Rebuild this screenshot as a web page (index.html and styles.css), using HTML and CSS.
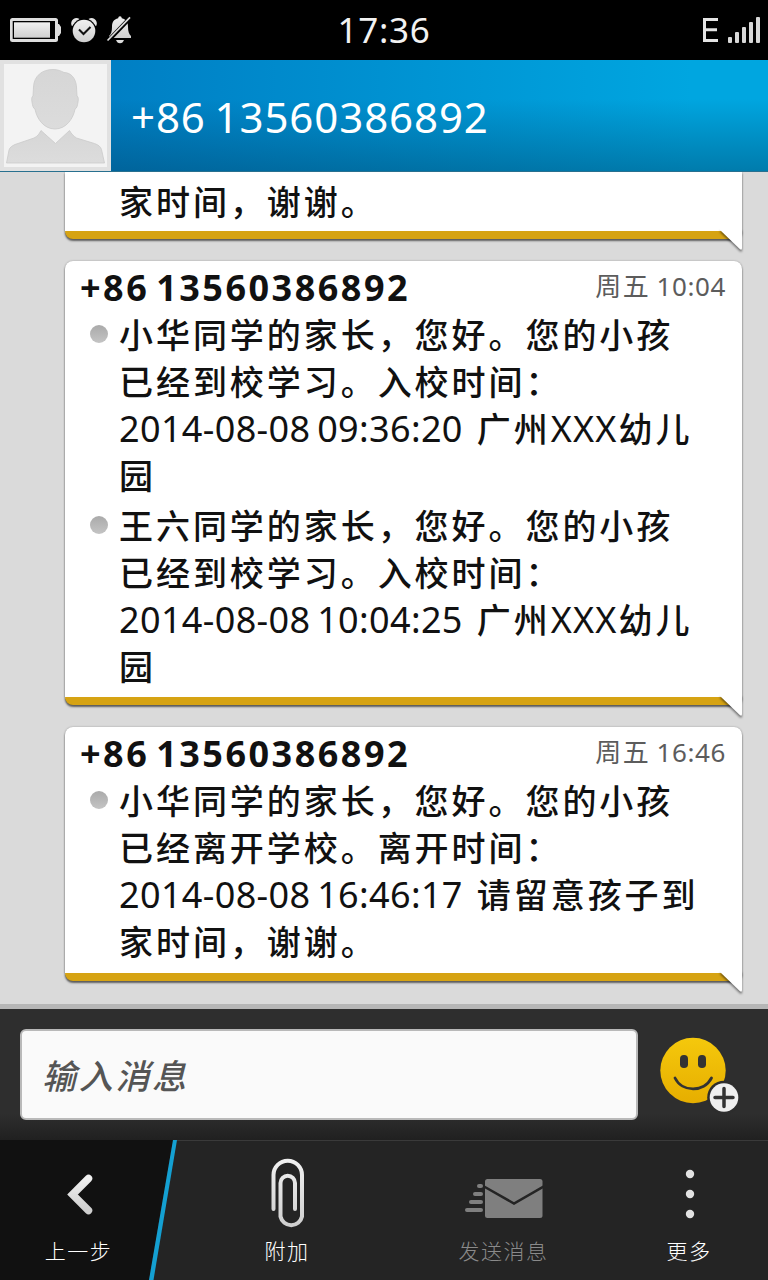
FILE: index.html
```html
<!DOCTYPE html>
<html lang="zh-CN">
<head>
    <meta charset="UTF-8">
    <meta name="viewport" content="width=device-width, initial-scale=1.0">
    <title>+86 13560386892</title>
    <link rel="stylesheet" href="styles.css">
</head>
<body>

<div class="screen">
    <div class="status-bar">
        <div class="status-left">
            <svg width="134" height="30" viewBox="0 0 134 30">
                <defs>
                    <linearGradient id="silver" x1="0" y1="0" x2="0" y2="1">
                        <stop offset="0" stop-color="#f0f0f0"/>
                        <stop offset="1" stop-color="#cfcfcf"/>
                    </linearGradient>
                </defs>
                <!-- battery -->
                <rect x="10" y="3" width="48" height="24" rx="2.5" fill="#dedede"/>
                <path d="M57 9h2l2 3v6l-2 3h-2z" fill="#ddd"/>
                <rect x="12.700" y="6" width="42.300" height="18" fill="#000"/>
                <rect x="14" y="7.300" width="36" height="15.400" fill="url(#silver)"/>
                <!-- alarm -->
                <path d="M71.500 10.500a6 6 0 0 1 2-6.500c2-1.500 4-1.300 6 0l-7 7z" fill="#e4e4e4"/>
                <path d="M96.500 10.500a6 6 0 0 0-2-6.500c-2-1.500-4-1.300-6 0l7 7z" fill="#e4e4e4"/>
                <circle cx="84" cy="16" r="12.500" fill="#000"/>
                <circle cx="84" cy="16" r="11.300" fill="url(#silver)"/>
                <path d="M79 14.500l4.500 4.500 7-7" fill="none" stroke="#111" stroke-width="2"/>
                <!-- muted bell -->
                <path d="M120 1.300c1.200 0 1.600.9 1.800 2 4.700 1.200 6.200 4.200 6.200 8.700 0 4.500 1 7 3 9v2h-22v-2c2-2 3-4.500 3-9 0-4.500 1.500-7.500 6.200-8.700.2-1.100.6-2 1.800-2z" fill="url(#silver)"/>
                <path d="M116 25h8c-.8 2-2 3.300-4 3.300s-3.200-1.300-4-3.300z" fill="#ddd"/>
                <path d="M108 26L130.500 2.500" stroke="#000" stroke-width="4"/>
                <path d="M107.500 25.500L130 2.300" stroke="#ddd" stroke-width="1.700"/>
            </svg>
        </div>
        <div class="clock">17:36</div>
        <div class="status-right">
            <svg width="60" height="30" viewBox="0 0 60 30">
                <path d="M18 4.500H4.500V25.500H18M4.500 14.800H17" fill="none" stroke="#e4e4e4" stroke-width="3"/>
                <g fill="#d8d8d8">
                    <rect x="28" y="22" width="4" height="6" rx="1"/>
                    <rect x="35" y="17" width="4" height="11" rx="1"/>
                    <rect x="42" y="12" width="4" height="16" rx="1"/>
                    <rect x="49" y="7" width="4" height="21" rx="1"/>
                    <rect x="56" y="2" width="4" height="26" rx="1"/>
                </g>
            </svg>
        </div>
    </div>

    <div class="header">
        <div class="avatar">
            <svg width="103" height="103" viewBox="0 0 103 103">
                <defs>
                    <linearGradient id="body" x1="0" y1="0" x2="0" y2="1">
                        <stop offset="0" stop-color="#d6d6d6"/>
                        <stop offset="1" stop-color="#dcdcdc"/>
                    </linearGradient>
                </defs>
                <path d="M49 5.500c5 0 8 1.500 11 3 7 0 12 6 12.500 14.500l.5 9c1.500 1 1.500 3 1 6s-1 6.500-3 7c-1.500 9-8.500 20-20 20s-18.500-11-20-20c-2-.5-2.500-4-3-7s-.5-5 1-6l.5-9C30 12 38 5.500 49 5.500z" fill="url(#body)" stroke="#cacaca" stroke-width=".8"/>
                <path d="M2.500 99L5 86c1-3 3-4 6-5.500l19-6.500c4-2 5-4 7-7.500l14.500 13L65.500 66.500c2 3.500 4 5.500 7 7.500l18 5.500c4 1.500 6 3 7 6L100.500 99z" fill="url(#body)" stroke="#cacaca" stroke-width=".8"/>
            </svg>
        </div>
        <div class="contact">+86 13560386892</div>
    </div>

    <div class="thread">
        <div class="bubble bubble-cut">
            <div class="line">家时间，谢谢。</div>
            <svg class="tail" width="24" height="24" viewBox="0 0 24 24"><path d="M0 1L20 20.300Q22 21.500 22 19V0H0z" fill="#fff"/></svg>
        </div>

        <div class="bubble">
            <div class="bubble-head">
                <span class="sender">+86 13560386892</span>
                <span class="time">周五 <b>10:04</b></span>
            </div>
            <div class="message">
                <span class="dot"></span>
                <div class="line">小华同学的家长，您好。您的小孩</div>
                <div class="line">已经到校学习。入校时间：</div>
                <div class="line"><span class="num">2014-08-08 09:36:20</span>广州<span class="latin">XXX</span>幼儿</div>
                <div class="line">园</div>
            </div>
            <div class="message">
                <span class="dot"></span>
                <div class="line">王六同学的家长，您好。您的小孩</div>
                <div class="line">已经到校学习。入校时间：</div>
                <div class="line"><span class="num">2014-08-08 10:04:25</span>广州<span class="latin">XXX</span>幼儿</div>
                <div class="line">园</div>
            </div>
            <svg class="tail" width="24" height="24" viewBox="0 0 24 24"><path d="M0 1L20 20.300Q22 21.500 22 19V0H0z" fill="#fff"/></svg>
        </div>

        <div class="bubble">
            <div class="bubble-head">
                <span class="sender">+86 13560386892</span>
                <span class="time">周五 <b>16:46</b></span>
            </div>
            <div class="message">
                <span class="dot"></span>
                <div class="line">小华同学的家长，您好。您的小孩</div>
                <div class="line">已经离开学校。离开时间：</div>
                <div class="line"><span class="num">2014-08-08 16:46:17</span>请留意孩子到</div>
                <div class="line">家时间，谢谢。</div>
            </div>
            <svg class="tail" width="24" height="24" viewBox="0 0 24 24"><path d="M0 1L20 20.300Q22 21.500 22 19V0H0z" fill="#fff"/></svg>
        </div>
    </div>

    <div class="composer">
        <div class="input">输入消息</div>
        <svg class="smiley" width="82" height="80" viewBox="0 0 82 80">
            <defs>
                <linearGradient id="yellow" x1="0" y1="0" x2="0" y2="1">
                    <stop offset="0" stop-color="#f5c80c"/>
                    <stop offset="1" stop-color="#e6ae00"/>
                </linearGradient>
            </defs>
            <circle cx="35" cy="35.500" r="32.700" fill="url(#yellow)"/>
            <rect x="22" y="20" width="8" height="13" rx="3.800" fill="#333"/>
            <rect x="40" y="20" width="8" height="13" rx="3.800" fill="#333"/>
            <path d="M17 43c7 14.500 29 14.500 36.500 0" fill="none" stroke="#333" stroke-width="2.800" stroke-linecap="round"/>
            <circle cx="66" cy="62.500" r="16.800" fill="#2d2d2d"/>
            <circle cx="66" cy="62.500" r="14.300" fill="#efefef"/>
            <path d="M66 53.500v18M57 62.500h18" stroke="#333" stroke-width="3.500" stroke-linecap="round"/>
        </svg>
    </div>

    <div class="action-bar">
        <svg class="slash" width="190" height="140" viewBox="0 0 190 140">
            <path d="M0 0H173L149 140H0z" fill="#111"/>
            <path d="M173 0h4L153.500 140h-4.500z" fill="#14a0d2"/>
        </svg>
        <div class="action back">
            <svg width="60" height="80" viewBox="0 0 60 80"><path d="M39.500 28.500L23.500 44.500L39.500 60.500" fill="none" stroke="url(#silver)" stroke-width="7.500" stroke-linecap="round"/></svg>
            <span>上一步</span>
        </div>
        <div class="action attach">
            <svg width="60" height="80" viewBox="0 0 60 80"><path d="M16.500 59V25a14.250 14.250 0 0 1 28.500 0V66.500a11 11 0 0 1-21.500 0V33a7 7 0 0 1 14.500 0V59" fill="none" stroke="url(#silver)" stroke-width="4" stroke-linecap="round"/></svg>
            <span>附加</span>
        </div>
        <div class="action send">
            <svg width="80" height="80" viewBox="0 0 80 80">
                <rect x="21" y="29" width="57.500" height="39" rx="2.500" fill="#7f7f7f"/>
                <path d="M20 36.500L50 53.500L79.500 36.500" fill="none" stroke="#242424" stroke-width="2.500"/>
                <path d="M15 36h2M11 44h6M7 52h10M3 60h14" stroke="#7f7f7f" stroke-width="4" stroke-linecap="round"/>
            </svg>
            <span>发送消息</span>
        </div>
        <div class="action more">
            <svg width="60" height="80" viewBox="0 0 60 80" fill="#e2e2e2"><circle cx="31" cy="24" r="4.200"/><circle cx="31" cy="44" r="4.200"/><circle cx="31" cy="64" r="4.200"/></svg>
            <span>更多</span>
        </div>
    </div>
</div>

</body>
</html>
```
FILE: styles.css
```css
* {
    box-sizing: border-box;
}
body {
    margin: 0;
    font-family: "Noto Sans", "Noto Sans CJK SC", sans-serif;
    background-color: #000;
}
.screen {
    width: 768px;
    height: 1280px;
    display: flex;
    flex-direction: column;
    overflow: hidden;
}

/* Status bar */
.status-bar {
    height: 60px;
    display: grid;
    grid-template-columns: 1fr auto 1fr;
    align-items: center;
    background-color: #000;
    color: #f2f2f2;
}
.status-bar svg {
    display: block;
}
.status-right {
    justify-self: end;
    padding-right: 8px;
}
.clock {
    font-size: 35px;
    line-height: 60px;
    letter-spacing: 0.7px;
}

/* Header */
.header {
    height: 112px;
    display: flex;
    align-items: center;
    background: linear-gradient(to bottom, rgba(0, 50, 90, 0) 35%, rgba(0, 60, 95, 0.4)), linear-gradient(to right, #007fc4 15%, #00a6e0 90%);
    border-bottom: 1px solid #28708f;
}
.avatar {
    width: 111px;
    height: 111px;
    background-color: #f3f3f3;
    border: 4px solid #e1e1e1;
}
.avatar svg {
    display: block;
}
.contact {
    padding-left: 20px;
    padding-top: 2px;
    font-size: 42px;
    letter-spacing: 0.9px;
    word-spacing: -3px;
    color: #fff;
}

/* Messages */
.thread {
    height: 832px;
    display: flex;
    flex-direction: column;
    gap: 22px;
    padding: 0 26px 0 65px;
    background-color: #dadada;
}
.bubble {
    position: relative;
    height: 254px;
    padding-bottom: 8px;
    background-color: #fff;
    border-bottom: 8px solid #d6a313;
    border-radius: 8px;
    box-shadow: 0 2px 2px rgba(0, 0, 0, 0.55), 0 0 2px rgba(0, 0, 0, 0.3);
    color: #111;
}
.bubble:nth-child(2) {
    height: 444px;
}
.bubble-cut {
    height: 67px;
    padding-top: 5px;
    padding-left: 54px;
    border-radius: 0 0 8px 8px;
    clip-path: inset(0 -4px -20px -4px);
}
/* covers the right end of the gold edge */
.tail {
    position: absolute;
    right: -2px;
    bottom: -22px;
    filter: drop-shadow(0 2px 1px rgba(0, 0, 0, 0.5));
}
.bubble-head {
    height: 49px;
    display: flex;
    justify-content: space-between;
    padding: 0 16px 0 15px;
    line-height: 53px;
}
.sender {
    font-size: 36px;
    font-weight: bold;
    letter-spacing: 2.5px;
    word-spacing: -5px;
}
.time {
    font-size: 26px;
    line-height: 51px;
    letter-spacing: 1.5px;
    word-spacing: -2px;
    white-space: nowrap;
    color: #5c5c5c;
}
.time b {
    font-weight: normal;
    letter-spacing: 0.6px;
}
.message {
    position: relative;
    padding-left: 54px;
    margin-bottom: 3px;
}
.dot {
    position: absolute;
    left: 25px;
    top: 15px;
    width: 18px;
    height: 18px;
    border-radius: 50%;
    background: linear-gradient(#aaa, #c4c4c4);
}
.line {
    height: 47px;
    font-family: "Noto Sans CJK SC", sans-serif;
    font-size: 34px;
    font-weight: 500;
    line-height: 47px;
    letter-spacing: 2.95px;
    white-space: nowrap;
}
.num, .latin {
    font-family: "Noto Sans", sans-serif;
    font-size: 36px;
    font-weight: 400;
}
.num {
    margin-right: 14px;
    letter-spacing: 0.35px;
    word-spacing: -3px;
}
.latin {
    letter-spacing: 1.2px;
    margin-right: 1px;
}

/* Composer */
.composer {
    height: 136px;
    display: flex;
    align-items: flex-start;
    padding: 20px 20px 0;
    background: linear-gradient(#2e2e2e 80%, #202020);
    border-top: 5px solid #b6b6b6;
}
.input {
    width: 618px;
    height: 91px;
    padding-left: 20px;
    background-color: #fafafa;
    border: 2px solid #b9b9b9;
    border-radius: 6px;
    font-size: 34px;
    line-height: 90px;
    letter-spacing: 2.7px;
    font-style: italic;
    font-weight: 500;
    color: #555;
}
.smiley {
    margin: 6px 0 0 20px;
}

/* Action bar */
.action-bar {
    position: relative;
    height: 140px;
    display: grid;
    grid-template-columns: 157px 260px 173px 178px;
    background-color: #242424;
    border-top: 1px solid #3a3a3a;
}
.slash {
    position: absolute;
    left: 0;
    top: -1px;
}
.action {
    position: relative;
    display: flex;
    flex-direction: column;
    align-items: center;
    padding-top: 9px;
    font-size: 21px;
    font-weight: 300;
    line-height: 42px;
    letter-spacing: 1.5px;
    color: #fff;
}
.send {
    color: #8a8a8a;
}
.more {
    padding-left: 20px;
}
```
